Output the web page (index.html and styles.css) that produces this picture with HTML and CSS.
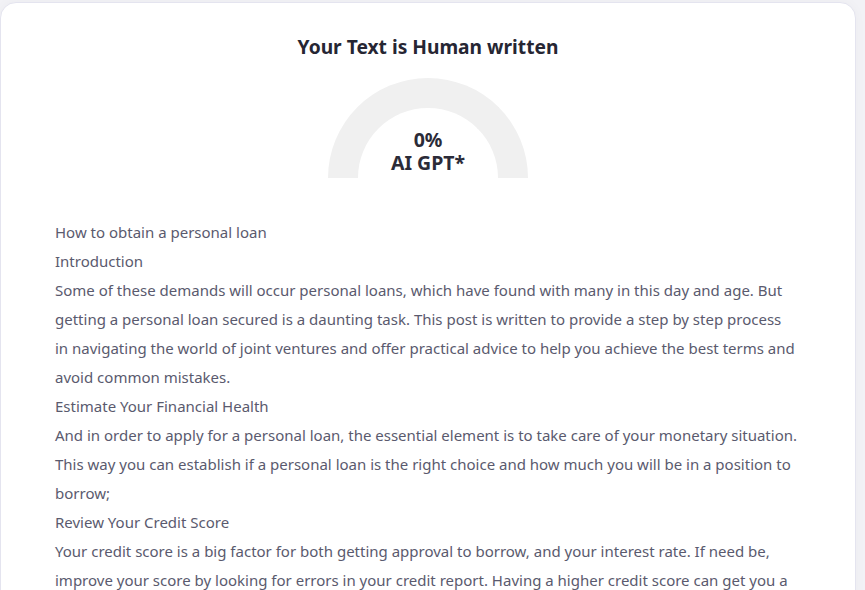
FILE: index.html
```html
<!DOCTYPE html>
<html lang="en">
<head>
    <meta charset="UTF-8">
    <meta name="viewport" content="width=device-width, initial-scale=1.0">
    <title>AI Detector Result</title>
    <link rel="stylesheet" href="styles.css">
</head>
<body>

<div class="card">
    <h1 class="result-title">Your Text is Human written</h1>

    <div class="gauge">
        <div class="gauge-value">0%</div>
        <div class="gauge-label">AI GPT*</div>
    </div>

    <div class="checked-text">
        <p>How to obtain a personal loan</p>
        <p>Introduction</p>
        <p>Some of these demands will occur personal loans, which have found with many in this day and age. But getting a personal loan secured is a daunting task. This post is written to provide a step by step process in navigating the world of joint ventures and offer practical advice to help you achieve the best terms and avoid common mistakes.</p>
        <p>Estimate Your Financial Health</p>
        <p>And in order to apply for a personal loan, the essential element is to take care of your monetary situation. This way you can establish if a personal loan is the right choice and how much you will be in a position to borrow;</p>
        <p>Review Your Credit Score</p>
        <p>Your credit score is a big factor for both getting approval to borrow, and your interest rate. If need be, improve your score by looking for errors in your credit report. Having a higher credit score can get you a better interest rate and more favourable terms on your loan.</p>
    </div>
</div>

</body>
</html>
```

FILE: styles.css
```css
body {
    font-family: "Noto Sans", "Open Sans", sans-serif;
    background-color: #f2f2f6;
    margin: 0;
    overflow: hidden;
}
.card {
    width: 856px;
    box-sizing: border-box;
    margin-top: 2px;
    background-color: #fff;
    border: 1px solid #e4e4ef;
    border-radius: 16px;
    padding: 32px 54px 40px 54px;
    box-shadow: 0 0 12px rgba(0, 0, 0, 0.03);
}
.result-title {
    font-size: 19.2px;
    font-weight: 700;
    color: #262633;
    text-align: center;
    margin: 0 0 19px 0;
    line-height: 24px;
}
.gauge {
    width: 200px;
    height: 100px;
    box-sizing: border-box;
    margin: 0 auto;
    border: 30px solid #f0f0f0;
    border-bottom: none;
    border-radius: 100px 100px 0 0;
    display: flex;
    flex-direction: column;
    justify-content: flex-end;
    align-items: center;
    color: #2b2b38;
    font-weight: 700;
    font-size: 19.5px;
    line-height: 23px;
}
.gauge-label {
    white-space: nowrap;
    margin-bottom: 4px;
}
.checked-text {
    margin: 40px 3.2px 0 0;
    color: #5a5a6e;
    font-size: 15px;
    line-height: 29px;
}
.checked-text p {
    margin: 0;
}
```
